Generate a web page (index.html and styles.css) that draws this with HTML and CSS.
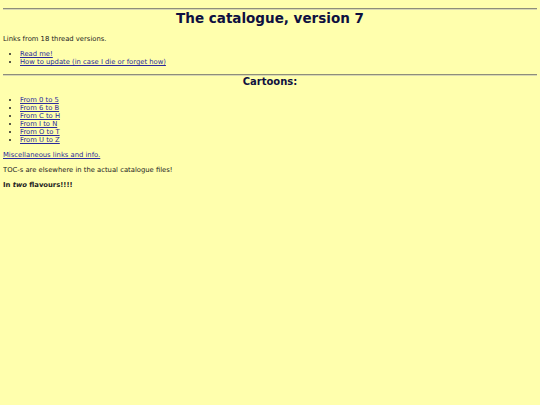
FILE: index.html
```html
<!DOCTYPE html>
<html lang="en">
<head>
    <meta charset="UTF-8">
    <meta name="viewport" content="width=device-width, initial-scale=1.0">
    <title>The catalogue, version 7</title>
    <link rel="stylesheet" href="styles.css">
</head>
<body>
    <hr>
    <h1>The catalogue, version 7</h1>
    <p>Links from 18 thread versions.</p>
    <ul>
        <li><a href="#">Read me!</a></li>
        <li><a href="#">How to update (in case I die or forget how)</a></li>
    </ul>

    <hr>
    <h2>Cartoons:</h2>
    <ul>
        <li><a href="#">From 0 to 5</a></li>
        <li><a href="#">From 6 to B</a></li>
        <li><a href="#">From C to H</a></li>
        <li><a href="#">From I to N</a></li>
        <li><a href="#">From O to T</a></li>
        <li><a href="#">From U to Z</a></li>
    </ul>

    <p><a href="#">Miscellaneous links and info.</a></p>
    <p>TOC-s are elsewhere in the actual catalogue files!</p>
    <p class="strong">In <em>two</em> flavours!!!!</p>
</body>
</html>
```

FILE: styles.css
```css
body {
    font-family: "DejaVu Sans", Verdana, sans-serif;
    font-size: 6.8px;
    line-height: 8px;
    background-color: #ffffad;
    color: #222;
    margin: 0 3px;
}
hr {
    margin: 8px 0 0;
    border: none;
    border-top: 1px solid #8e8e7a;
    border-bottom: 1px solid #d8d8b0;
}
h1 {
    font-size: 13.5px;
    line-height: 16px;
    color: #0e1040;
    text-align: center;
    margin: 0 0 9px;
}
h2 {
    font-size: 10px;
    line-height: 12px;
    color: #0e1040;
    text-align: center;
    margin: 0 0 8px;
}
p {
    margin: 7px 0;
}
ul {
    margin: 7px 0;
    padding-left: 17px;
}
a {
    color: #2a2a9c;
}
.strong {
    font-weight: bold;
}
```
